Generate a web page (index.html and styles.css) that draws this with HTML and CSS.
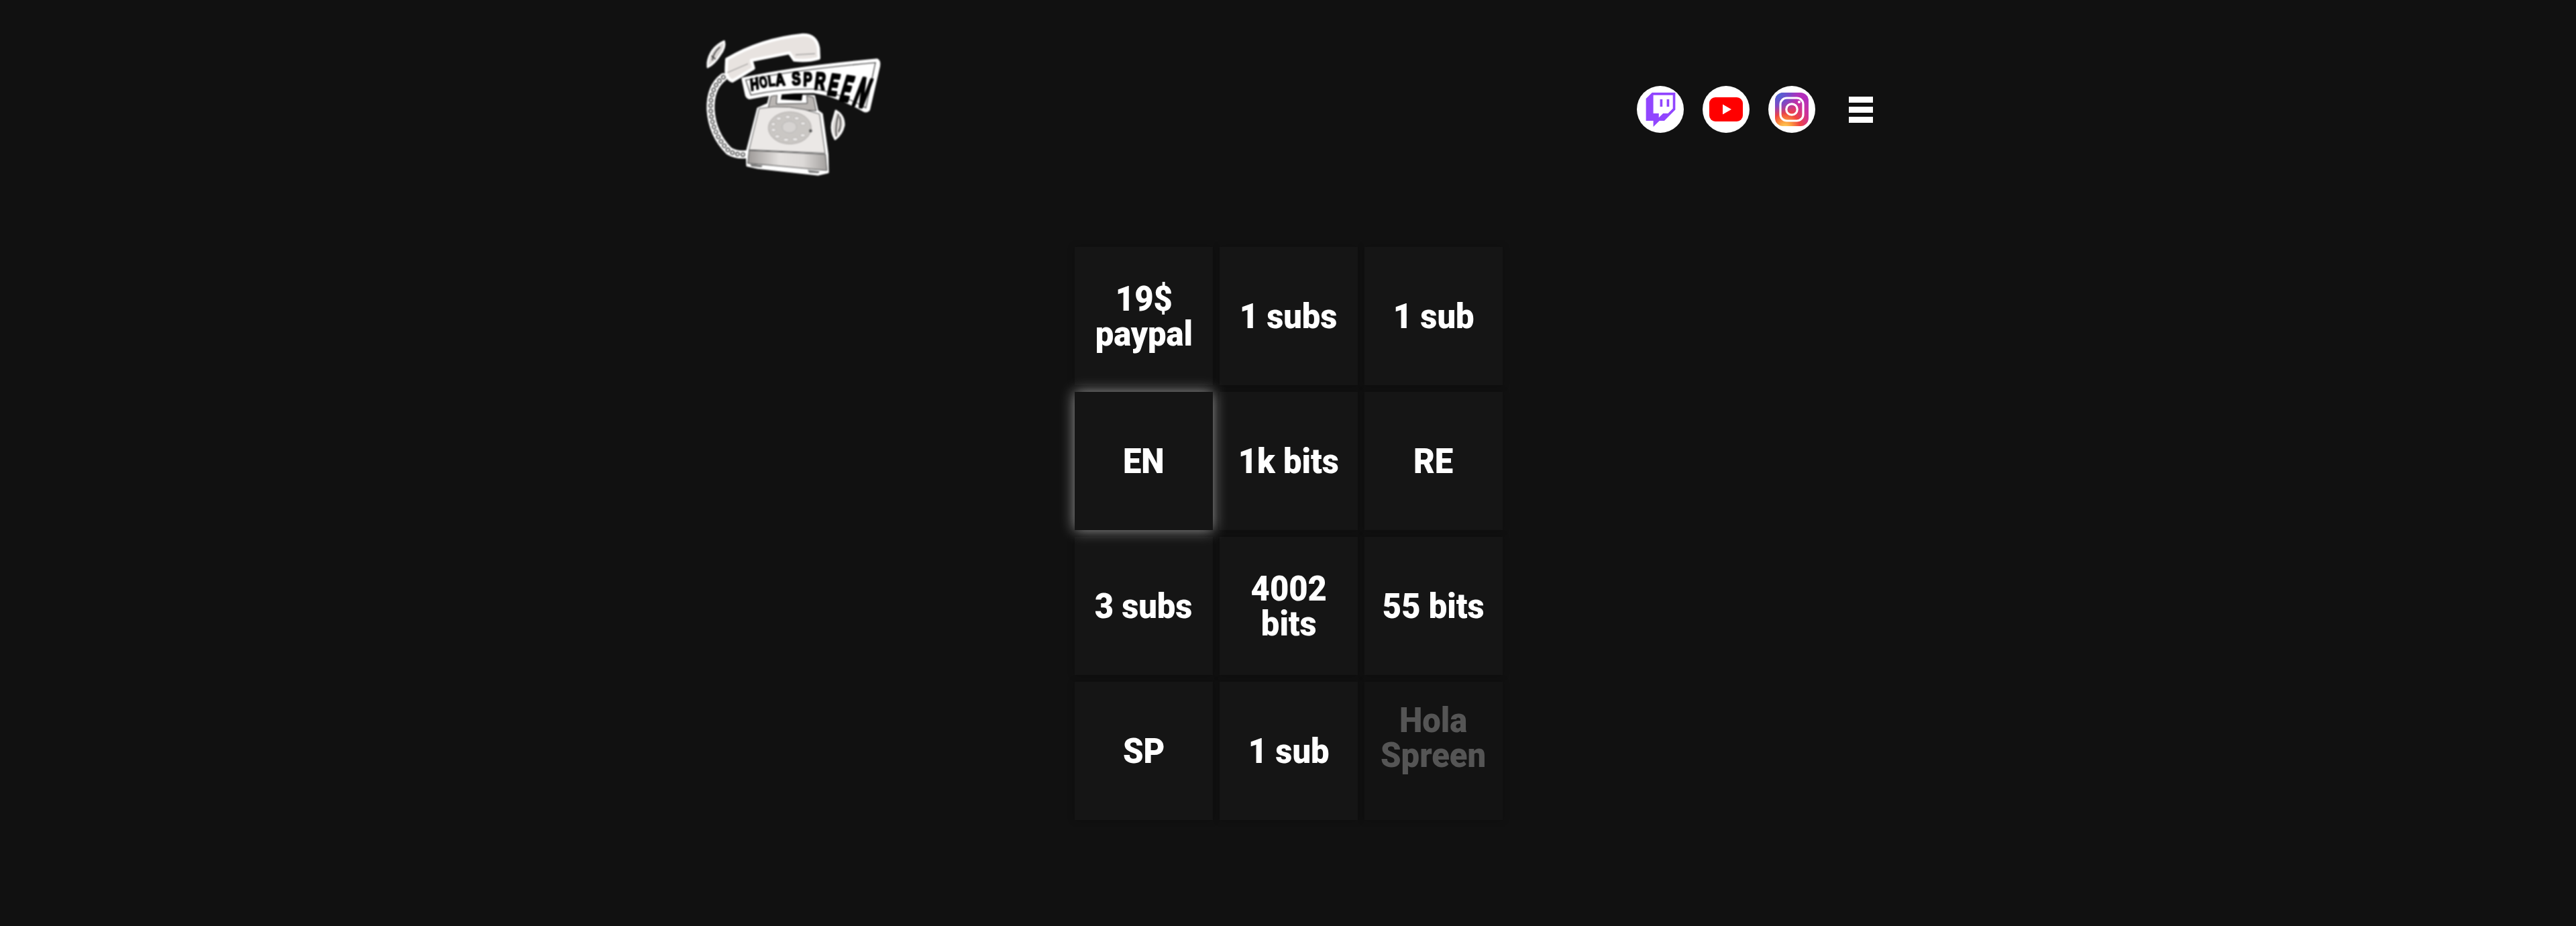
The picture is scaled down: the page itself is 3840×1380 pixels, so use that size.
FILE: index.html
```html
<!DOCTYPE html>
<html lang="en">
<head>
    <meta charset="UTF-8">
    <meta name="viewport" content="width=device-width, initial-scale=1.0">
    <title>Hola Spreen</title>
    <link rel="stylesheet" href="styles.css">
</head>
<body>
    <header class="site-header">
        <a class="logo" href="#">
            <svg class="logo-art" viewBox="60 24 960 750" width="320" height="250">
                <defs>
                    <linearGradient id="base-shade" x1="0" x2="1" y1="0" y2="0">
                        <stop offset="0" stop-color="#9d9997"/>
                        <stop offset="0.4" stop-color="#e4e1df"/>
                        <stop offset="0.7" stop-color="#dcd9d7"/>
                        <stop offset="1" stop-color="#a3a09e"/>
                    </linearGradient>
                </defs>
                <!-- ringing marks -->
                <path class="ring" d="M105 190 Q115 125 178 95 Q186 120 160 155 Q135 195 105 210Z"/>
                <path class="ring-line" d="M125 180 Q130 145 160 120 M140 175 L122 160"/>
                <path class="ring" d="M678 405 Q715 425 714 470 Q705 510 675 532 Q655 500 662 460Z"/>
                <path class="ring-line" d="M690 420 Q675 470 680 520 M695 430 Q705 470 690 500"/>

                <!-- cord -->
                <path class="cord-back" d="M175 255 Q115 300 118 400 Q125 510 200 585 Q235 605 275 600"/>
                <path class="cord-ring" d="M175 255 Q115 300 118 400 Q125 510 200 585 Q235 605 275 600"/>
                <path class="cord-hole" d="M175 255 Q115 300 118 400 Q125 510 200 585 Q235 605 275 600"/>

                <!-- phone body -->
                <path class="outline" d="M385 335 L580 340 L595 405 L615 420 L640 600 L642 680 L600 690 L330 660 L282 650 L280 590 L330 395 L375 375Z"/>
                <path class="neck" d="M388 340 L415 335 L412 375 L550 372 L548 338 L578 345 L590 405 L375 395Z"/>
                <path class="window" d="M438 322 L530 325 L525 360 L432 355Z"/>
                <path class="body" d="M335 395 Q470 370 605 420 L630 595 L290 580Z"/>
                <path class="base" d="M290 582 L632 600 L638 672 L400 650 L284 640Z"/>
                <path class="foot" d="M295 642 L350 650 L345 658 L300 654Z M552 670 L605 676 L600 684 L558 682Z"/>
                <ellipse class="dial" cx="472" cy="482" rx="96" ry="72"/>
                <ellipse class="dial-hub" cx="470" cy="478" rx="32" ry="26"/>
                <g class="dial-holes">
                    <ellipse cx="423" cy="440" rx="11" ry="7"/>
                    <ellipse cx="463" cy="433" rx="11" ry="7"/>
                    <ellipse cx="503" cy="439" rx="11" ry="7"/>
                    <ellipse cx="531" cy="462" rx="11" ry="7"/>
                    <ellipse cx="398" cy="465" rx="10" ry="7"/>
                    <ellipse cx="399" cy="491" rx="10" ry="7"/>
                    <ellipse cx="416" cy="520" rx="11" ry="7"/>
                    <ellipse cx="455" cy="535" rx="12" ry="7"/>
                    <ellipse cx="496" cy="533" rx="12" ry="7"/>
                    <ellipse cx="530" cy="515" rx="11" ry="7"/>
                </g>
                <circle class="dial-stop" cx="565" cy="495" r="7"/>

                <!-- handset -->
                <path class="handset" d="M190 175 Q340 85 530 66 Q590 65 600 125 L602 170 Q550 185 492 178 L470 146 L300 180 L310 215 L215 272 Q185 262 188 215Z"/>
                <path class="handset-line" d="M192 235 L285 195 M498 155 L585 150"/>

                <!-- banner -->
                <path class="banner" d="M262 262 Q500 210 862 178 Q876 185 868 215 L825 400 Q815 412 800 402 Q680 335 580 320 Q430 318 292 348 Q282 345 278 335Z"/>
                <path class="banner-line" d="M275 268 Q500 222 855 190 L812 392 Q680 320 580 308 Q430 306 298 335Z"/>
                <g class="banner-text">
                    <text transform="translate(298 316) rotate(-14) skewX(-8) scale(.68 .92)">H</text>
                    <text transform="translate(341 304) rotate(-12) scale(.56 .86)">O</text>
                    <text transform="translate(378 296) rotate(-8) scale(.62 .84)">L</text>
                    <text transform="translate(410 295) rotate(-6) scale(.74 .96)">A</text>
                    <text transform="translate(482 290) rotate(-3) scale(.74 1.02)">S</text>
                    <text transform="translate(532 294) rotate(1) scale(.74 1.08)">P</text>
                    <text transform="translate(580 308) rotate(3) skewX(-4) scale(.82 1.34)">R</text>
                    <text transform="translate(636 332) rotate(7) skewX(-6) scale(.84 1.68)">E</text>
                    <text transform="translate(690 356) rotate(9) skewX(-8) scale(.84 2)">E</text>
                    <text transform="translate(748 378) rotate(12) skewX(-9) scale(.96 2.3)">N</text>
                </g>
            </svg>
        </a>
        <nav class="socials">
            <a class="social" href="#">
                <svg class="icon-twitch" viewBox="0 0 24 24" width="51" height="51">
                    <path fill="#9146ff" d="M11.571 4.714h1.715v5.143H11.57zm4.715 0H18v5.143h-1.714zM6 0L1.714 4.286v15.428h5.143V24l4.286-4.286h3.428L22.286 12V0zm14.571 11.143l-3.428 3.428h-3.429l-3 3v-3H6.857V1.714h13.714Z"/>
                </svg>
            </a>
            <a class="social" href="#">
                <svg viewBox="0 0 50 36" width="50" height="36">
                    <rect width="50" height="36" rx="9" fill="#ff0000"/>
                    <path fill="#fff" d="M20 10.5 L33 18 L20 25.5Z"/>
                </svg>
            </a>
            <a class="social" href="#">
                <svg viewBox="0 0 50 50" width="50" height="50">
                    <defs>
                        <radialGradient id="ig-warm" cx="0.3" cy="1.05" r="1.05">
                            <stop offset="0" stop-color="#fdd860"/>
                            <stop offset="0.18" stop-color="#fda03e"/>
                            <stop offset="0.42" stop-color="#f0443f"/>
                            <stop offset="0.75" stop-color="#c9309f"/>
                            <stop offset="1" stop-color="#b32fbc"/>
                        </radialGradient>
                        <radialGradient id="ig-cool" cx="0.05" cy="0" r="0.7">
                            <stop offset="0" stop-color="#3f6fd6"/>
                            <stop offset="0.55" stop-color="#6a4fd0" stop-opacity="0.8"/>
                            <stop offset="1" stop-color="#8a3fc8" stop-opacity="0"/>
                        </radialGradient>
                    </defs>
                    <rect width="50" height="50" rx="12" fill="url(#ig-warm)"/>
                    <rect width="50" height="50" rx="12" fill="url(#ig-cool)"/>
                    <rect x="8" y="8" width="34" height="34" rx="9.5" fill="none" stroke="#fff" stroke-width="3.2"/>
                    <circle cx="25" cy="25" r="8.2" fill="none" stroke="#fff" stroke-width="3.2"/>
                    <circle cx="36" cy="14" r="2.1" fill="#fff"/>
                </svg>
            </a>
            <button class="menu-btn" type="button" aria-label="Menu">
                <span></span>
                <span></span>
                <span></span>
            </button>
        </nav>
    </header>

    <main class="board-wrap">
        <div class="board">
            <div class="cell"><span class="label">19$<br>paypal</span></div>
            <div class="cell"><span class="label">1 subs</span></div>
            <div class="cell"><span class="label">1 sub</span></div>
            <div class="cell active"><span class="label">EN</span></div>
            <div class="cell"><span class="label">1k bits</span></div>
            <div class="cell"><span class="label">RE</span></div>
            <div class="cell"><span class="label">3 subs</span></div>
            <div class="cell"><span class="label">4002<br>bits</span></div>
            <div class="cell"><span class="label">55 bits</span></div>
            <div class="cell"><span class="label">SP</span></div>
            <div class="cell"><span class="label">1 sub</span></div>
            <div class="cell muted"><span class="label">Hola<br>Spreen</span></div>
        </div>
    </main>
</body>
</html>
```

FILE: styles.css
```css
html, body {
    margin: 0;
    min-height: 1380px;
    background-color: #111111;
}

body {
    font-family: Roboto, "Liberation Sans", sans-serif;
    color: white;
}

.site-header {
    display: flex;
    justify-content: space-between;
    align-items: center;
    width: 1760px;
    height: 326px;
    margin: 0 auto;
}

.logo {
    display: block;
    height: 250px;
}

.logo-art {
    display: block;
    filter: blur(0.9px);
}

.ring { fill: #d8d4d2; stroke: white; stroke-width: 9; stroke-linejoin: round; }
.ring-line { fill: none; stroke: #222; stroke-width: 4; }
.cord-back { fill: none; stroke: white; stroke-width: 36; stroke-linecap: round; }
.cord-ring { fill: none; stroke: #333; stroke-width: 20; stroke-linecap: round; stroke-dasharray: 0.1 24; }
.cord-hole { fill: none; stroke: white; stroke-width: 12; stroke-linecap: round; stroke-dasharray: 0.1 24; }
.outline { fill: white; stroke: white; stroke-width: 10; stroke-linejoin: round; }
.neck { fill: #b9b5b2; stroke: #333; stroke-width: 3; }
.window { fill: #050505; }
.body { fill: #ebe8e6; stroke: #555; stroke-width: 3; }
.base { fill: url(#base-shade); stroke: #444; stroke-width: 3; }
.foot { fill: #777; }
.dial { fill: #cac7c4; stroke: #9a9694; stroke-width: 2; }
.dial-hub { fill: #d6d3d1; stroke: #aaa; stroke-width: 2; }
.dial-holes ellipse { fill: #eeeceb; stroke: #8d8987; stroke-width: 1.5; }
.dial-stop { fill: #555; }
.handset { fill: #e8e3e0; stroke: white; stroke-width: 14; stroke-linejoin: round; }
.handset-line { fill: none; stroke: #888; stroke-width: 3; }
.banner { fill: white; stroke: white; stroke-width: 12; stroke-linejoin: round; }
.banner-line { fill: none; stroke: #444; stroke-width: 4; }

.banner-text text {
    font-family: "Liberation Sans", sans-serif;
    font-size: 80px;
    font-weight: bold;
    fill: black;
    stroke: black;
    stroke-width: 7px;
    stroke-linejoin: round;
}

.socials {
    display: flex;
    align-items: center;
    gap: 28px;
    padding-right: 8px;
}

.social {
    display: flex;
    justify-content: center;
    align-items: center;
    width: 70px;
    height: 70px;
    border-radius: 50%;
    background: white;
}

.menu-btn {
    display: flex;
    flex-direction: column;
    gap: 6px;
    width: 36px;
    margin-left: 22px;
    padding: 0;
    border: none;
    background: none;
    cursor: pointer;
}

.menu-btn span {
    display: block;
    width: 36px;
    height: 9px;
    background: white;
}

.board-wrap {
    padding: 42px 0 0 2px;
}

.board {
    display: grid;
    grid-template-columns: repeat(3, 206px);
    grid-auto-rows: 206px;
    gap: 10px;
    justify-content: center;
}

.cell {
    display: flex;
    justify-content: center;
    align-items: center;
    box-sizing: border-box;
    padding-top: 2px;
    text-align: center;
    background: #151515;
    box-shadow: 0 0 10px rgba(0, 0, 0, 0.25);
    font-size: 52px;
    font-weight: 900;
    line-height: 52px;
}

/* no condensed family is installed, so squeeze the type */
.label {
    display: inline-block;
    transform: scaleX(0.94);
    white-space: nowrap;
}

.cell.active {
    position: relative;
    z-index: 1;
    box-shadow: 0 0 20px rgba(255, 255, 255, 0.6);
}

.cell.muted {
    padding-bottom: 40px;
    background: #131313;
    color: #555555;
}
```
